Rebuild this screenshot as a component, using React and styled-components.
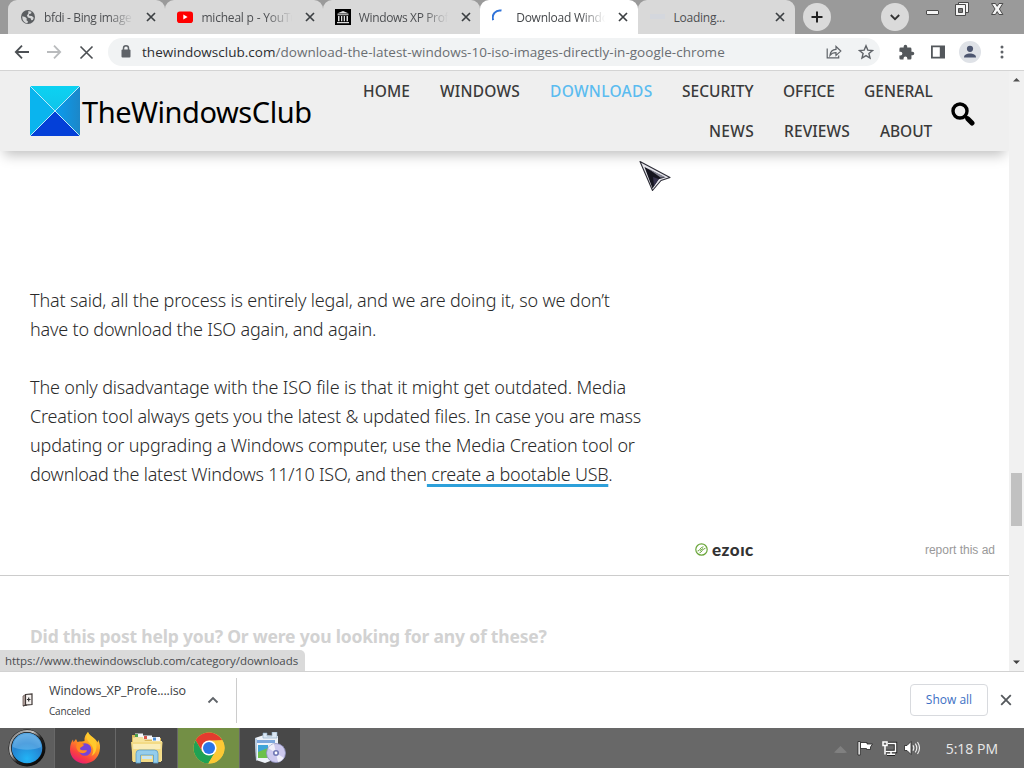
import React, { Component } from "react";
import styled, { createGlobalStyle } from "styled-components";

const tabs = [
  { title: "bfdi - Bing image", icon: "globe", track: -0.37 },
  { title: "micheal p - YouTu", icon: "youtube", track: -0.2 },
  { title: "Windows XP Prof", icon: "archive", track: -0.36 },
  { title: "Download Windo", icon: "spinner", active: true, track: -0.25 },
  { title: "Loading...", icon: "pending", track: -0.25, solid: true }
];

const menu = [
  [
    { label: "HOME", width: 47, track: 0.1 },
    { label: "WINDOWS", width: 80, track: 0.2 },
    { label: "DOWNLOADS", width: 102, track: 0.3, hover: true },
    { label: "SECURITY", width: 71, track: 0 },
    { label: "OFFICE", width: 51, track: -0.1 },
    { label: "GENERAL", width: 68, track: 0 }
  ],
  [
    { label: "NEWS", width: 45, track: 0.3 },
    { label: "REVIEWS", width: 66, track: 0.1 },
    { label: "ABOUT", width: 52, track: -0.1 }
  ]
];

const Favicon = ({ name }) => {
  switch (name) {
    case "globe":
      return (
        <svg width="16" height="16" viewBox="0 0 16 16">
          <circle cx="8" cy="8" r="7" fill="#5b5e61" />
          <path
            d="M2.3 7.2 5.2 8l1.6 1.5-.3 1.7L8 12.500l-.6 1.700C4.600 14 2 11.600 2.300 7.200z M8.300 2l3.200.7-.4 1.900-2.200.6.300 1.600 2.700.3 1.900 1.600-1 2.300-1.500.2-.7-2-2.700-.6-1-2.100 1.500-1.900z"
            fill="#d5d6d7"
          />
        </svg>
      );
    case "youtube":
      return (
        <svg width="16" height="16" viewBox="0 0 16 16">
          <rect x="0" y="2.500" width="16" height="11.500" rx="2.800" fill="#f00" />
          <path d="M6.300 5.600v5l4.300-2.500z" fill="#fff" />
        </svg>
      );
    case "archive":
      return (
        <svg width="16" height="16" viewBox="0 0 16 16">
          <rect width="16" height="16" fill="#000" />
          <path
            d="M2 4.500 8 2l6 2.500zM2.500 5.300h11v1h-11zM3 7h1.500v5.200H3zM6 7h1.300v5.200H6zM8.700 7H10v5.200H8.700zM11.500 7H13v5.200h-1.500zM2 13h12v1.200H2z"
            fill="#dcdcdc"
          />
        </svg>
      );
    case "spinner":
      return (
        <svg width="16" height="16" viewBox="0 0 16 16">
          <path
            d="M1.200 11.200A7.200 7.200 0 0 1 9.500 1.600"
            fill="none"
            stroke="#2f73d9"
            strokeWidth="2"
          />
        </svg>
      );
    default:
      return (
        <svg width="16" height="16" viewBox="0 0 16 16">
          <path d="M0 5h15v5H0z" fill="#d0d5e2" opacity=".5" />
        </svg>
      );
  }
};

const Cross = ({ size, color, weight }) => (
  <svg width={size} height={size} viewBox="0 0 10 10">
    <path d="M1 1l8 8M9 1L1 9" stroke={color} strokeWidth={weight} fill="none" />
  </svg>
);

const WindowControls = () => (
  <svg width="84" height="20" viewBox="0 0 84 20">
    <g fill="#f4f4f4" stroke="#4a4a4a" strokeWidth="1">
      <rect x="6.500" y="10.500" width="12" height="4" rx=".5" />
      <path d="M38.500 2.500h10v10h-10z" />
      <path d="M35.500 4.500h10v11h-10z" />
      <path d="M38.500 8.500h4v4h-4z" fill="#777" />
      <path d="M71.500 3.500h4l1.700 2.800 1.700-2.800h4l-3.500 5.500 3.500 5.500h-4l-1.700-2.900-1.700 2.900h-4L75 9z" />
    </g>
  </svg>
);

const BackIcon = ({ color }) => (
  <svg width="16" height="16" viewBox="0 0 16 16">
    <path
      d="M15 8H2M8 1.700 1.800 8 8 14.300"
      stroke={color}
      strokeWidth="1.800"
      fill="none"
    />
  </svg>
);

const ForwardIcon = ({ color }) => (
  <svg width="16" height="16" viewBox="0 0 16 16">
    <path
      d="M1 8h13M8 1.700 14.200 8 8 14.300"
      stroke={color}
      strokeWidth="1.800"
      fill="none"
    />
  </svg>
);

const LockIcon = () => (
  <svg width="10" height="14" viewBox="0 0 10 14">
    <rect x="0.500" y="4.500" width="9" height="8" rx="1" fill="#5f6368" />
    <path
      d="M2.500 5V3.300a2.500 2.500 0 0 1 5 0V5"
      stroke="#5f6368"
      strokeWidth="1.500"
      fill="none"
    />
  </svg>
);

const ShareIcon = () => (
  <svg width="16" height="16" viewBox="0 0 16 16">
    <g fill="none" stroke="#5f6368" strokeWidth="1.200">
      <path d="M1.200 4.500v9.300h11.500v-2.300" />
      <path d="M4 11.300c.4-3.800 2.700-5.700 6-5.900V2.500l4.800 4.600L10 11.400V8.600c-2.800 0-4.600.8-6 2.700z" />
    </g>
  </svg>
);

const StarIcon = () => (
  <svg width="16" height="16" viewBox="0 0 16 16">
    <path
      d="M8 1.800l1.800 4.300 4.700.4-3.600 3 1.100 4.600L8 11.600 4 14.100l1.100-4.600-3.600-3 4.700-.4z"
      fill="none"
      stroke="#5f6368"
      strokeWidth="1.400"
    />
  </svg>
);

const PuzzleIcon = () => (
  <svg width="17" height="17" viewBox="0 0 24 24">
    <path
      d="M20.500 11H19V7a2 2 0 0 0-2-2h-4V3.500a2.500 2.500 0 0 0-5 0V5H4a2 2 0 0 0-2 2v3.800h1.500a2.700 2.700 0 0 1 0 5.400H2V20a2 2 0 0 0 2 2h3.800v-1.500a2.700 2.700 0 0 1 5.400 0V22H17a2 2 0 0 0 2-2v-4h1.500a2.500 2.500 0 0 0 0-5z"
      fill="#54585c"
    />
  </svg>
);

const PanelIcon = () => (
  <svg width="16" height="16" viewBox="0 0 16 16">
    <path
      d="M1 1.500h14v13H1zM2.800 3.300v9.400h7V3.300z"
      fill="#54585c"
      fillRule="evenodd"
    />
  </svg>
);

const AvatarIcon = () => (
  <svg width="22" height="22" viewBox="0 0 22 22">
    <circle cx="11" cy="11" r="11" fill="#dfe2e7" />
    <circle cx="11" cy="7.800" r="3.100" fill="#4d5670" />
    <path d="M5 16.500c0-3 3-4 6-4s6 1 6 4z" fill="#4d5670" />
  </svg>
);

const DotsIcon = () => (
  <svg width="4" height="16" viewBox="0 0 4 16">
    <g fill="#5f6368">
      <circle cx="2" cy="3" r="1.500" />
      <circle cx="2" cy="8" r="1.500" />
      <circle cx="2" cy="13" r="1.500" />
    </g>
  </svg>
);

const SiteMark = () => (
  <svg width="50" height="50" viewBox="0 0 50 50">
    <defs>
      <linearGradient id="markTop" x1="0" y1="0" x2="0" y2="1">
        <stop offset="0" stopColor="#0cd2f2" />
        <stop offset="1" stopColor="#10c4ea" />
      </linearGradient>
      <linearGradient id="markRight" x1="0" y1="0" x2="1" y2="0">
        <stop offset="0" stopColor="#0a9cf0" />
        <stop offset="1" stopColor="#1c87c8" />
      </linearGradient>
    </defs>
    <path d="M0 0h50L25 25z" fill="url(#markTop)" />
    <path d="M0 0v50l25-25z" fill="#0ab4ee" />
    <path d="M50 0v50L25 25z" fill="url(#markRight)" />
    <path d="M0 50h50L25 25z" fill="#0440d8" />
    <path d="M0 0l50 50M50 0L0 50" stroke="#bdeafa" strokeWidth="1" />
  </svg>
);

const SearchIcon = () => (
  <svg width="24" height="24" viewBox="0 0 24 24">
    <circle cx="9" cy="9" r="7" fill="none" stroke="#000" strokeWidth="3.400" />
    <path d="M14.500 14.500l1.500 1.500" stroke="#000" strokeWidth="3.400" />
    <path d="M17 17l4 4" stroke="#000" strokeWidth="5" strokeLinecap="round" />
  </svg>
);

const EzoicMark = () => (
  <svg width="13" height="13" viewBox="0 0 13 13">
    <g fill="none" stroke="#6aa63a" strokeWidth="1.200">
      <circle cx="6.500" cy="6.500" r="5.700" />
      <path d="M2.500 8c2.500.4 2.200-3.800 6-4.300M4.500 9.800C7 9.400 7 6 10.500 5.200M5 7.600l3-2" strokeWidth="1" />
    </g>
  </svg>
);

const Pointer = () => (
  <svg width="34" height="34" viewBox="0 0 34 34">
    <path d="M1 1.500 31 17.500 22 20.500 13.500 30.500z" fill="#e4e4ea" stroke="#2c2c36" strokeWidth="1.100" strokeLinejoin="round" />
    <path d="M5.500 7 26 17.500l-6.500 1.800-6 9.200z" fill="#15151f" />
    <path d="M9 8.500l12.500 9 5.500 0z" fill="#80808f" />
    <path d="M14 17l6 2-5 7z" fill="#35324c" />
  </svg>
);

const IsoIcon = () => (
  <svg width="16" height="16" viewBox="0 0 16 16">
    <path d="M3 4 6 2.500v10L3 14z" fill="#b8a6a2" stroke="#6a5a57" strokeWidth=".8" />
    <path d="M5.500 2.500 12 2v10.500l-6.500 .5z" fill="#f6f2f0" stroke="#3f3836" strokeWidth="1.200" />
    <path d="M3 14l4-1" stroke="#3f3836" strokeWidth="1" />
    <path d="M8.700 5.500v4M6.900 7.500h3.600" stroke="#333" strokeWidth="1.200" />
  </svg>
);

const StartOrb = () => (
  <svg width="40" height="40" viewBox="0 0 40 40">
    <defs>
      <radialGradient id="orb" cx=".5" cy=".85" r=".85">
        <stop offset="0" stopColor="#22b4f6" />
        <stop offset=".6" stopColor="#2585d2" />
        <stop offset="1" stopColor="#5aa8e2" />
      </radialGradient>
      <linearGradient id="ring" x1="0" y1="0" x2="1" y2="1">
        <stop offset="0" stopColor="#777" />
        <stop offset=".35" stopColor="#c4c4c4" />
        <stop offset=".55" stopColor="#222" />
        <stop offset="1" stopColor="#000" />
      </linearGradient>
    </defs>
    <circle cx="20" cy="20" r="18.500" fill="#111" />
    <circle cx="20" cy="20" r="17" fill="none" stroke="url(#ring)" strokeWidth="2" />
    <circle cx="20" cy="20" r="15.300" fill="url(#orb)" />
    <path d="M6 19a14 13 0 0 1 28 0c-7 3.500-21 3.500-28 0z" fill="#84c1ee" opacity=".45" />
  </svg>
);

const FirefoxIcon = () => (
  <svg width="32" height="32" viewBox="0 0 32 32">
    <defs>
      <linearGradient id="fox" x1=".8" y1="0" x2=".25" y2="1">
        <stop offset="0" stopColor="#ffe53c" />
        <stop offset=".4" stopColor="#ff9a1f" />
        <stop offset=".75" stopColor="#fb4140" />
        <stop offset="1" stopColor="#e5197a" />
      </linearGradient>
    </defs>
    <path
      d="M19 0c1 4 8 6 9.500 10.500l.7-2.500c2 3.500 2.300 7 1.300 11.500C29 26.500 23 31.500 15.500 31.500 7 31.500 1 25 1 17.500 1 13 2.500 9.500 4 7.500l.5 2.700L7 7l1.500 3c3-.8 5.500-.3 7-1C15 5 17 2 19 0z"
      fill="url(#fox)"
    />
    <circle cx="16" cy="17.500" r="6.300" fill="#7543d8" />
    <path d="M8.500 10.500c2 1.300 4.500.7 6.500 2.300-1 2.300-4 2-4 4.200 2 2.500 5 .5 7 1.500-1 3-6 4-9 .5-2-2.500-2.500-5.500-.5-8.500z" fill="#ff8a21" />
    <path d="M19 0c1 4 8 6 8.500 13 .3 6-2 9.500-5 11 2.500-4 2.500-8-.5-11.500-3-3.500-6.500-6.500-3-12.500z" fill="#ffc92d" />
  </svg>
);

const FolderIcon = () => (
  <svg width="34" height="32" viewBox="0 0 34 32">
    <path d="M2 3h10l2 3h17v23H2z" fill="#dcb95c" />
    <path d="M5 1.500h8v4H5z" fill="#f5f7fa" />
    <path d="M5 2h3v3H5z" fill="#4ea04b" />
    <path d="M13 3.500h9v4h-9z" fill="#f5f7fa" />
    <path d="M14 4h3v3h-3z" fill="#d8564a" />
    <path d="M22 5h8v4h-8z" fill="#f5f7fa" />
    <path d="M23 5.500h3v3h-3z" fill="#4c8fd6" />
    <path d="M3 5.500h10l2 3.500h17v20H3z" fill="#f7e49c" />
    <path d="M1 10h31.500L31 30H3z" fill="#f3db86" />
    <path d="M3 12h27.500v5H3.300z" fill="#faedb8" />
    <path d="M6 31v-9.500Q6 18 9.500 18h15q3.500 0 3.500 3.500V31h-4.500v-8h-13v8z" fill="#94cdec" stroke="#5a9cc6" strokeWidth=".8" />
    <path d="M12 24h10v3H12z" fill="#c7e6f5" />
  </svg>
);

const ChromeIcon = () => (
  <svg width="32" height="32" viewBox="0 0 32 32">
    <circle cx="16" cy="16" r="15.500" fill="#ffcd40" />
    <path d="M2.600 8.200A15.500 15.500 0 0 1 29.400 8.300L16 8.500 9.500 20z" fill="#e33b2e" />
    <path d="M2.600 8.200A15.500 15.500 0 0 0 15.300 31.500L22 20l-12.500 0z" fill="#1fa254" />
    <path d="M29.400 8.300A15.500 15.500 0 0 1 15.300 31.500L22.500 20 22 9z" fill="#fcc934" />
    <circle cx="16" cy="16" r="7.600" fill="#fff" />
    <circle cx="16" cy="16" r="6" fill="#2b75e8" />
  </svg>
);

const InstallerIcon = () => (
  <svg width="32" height="32" viewBox="0 0 32 32">
    <path d="M1 6l9-3 14 1v22l-13 5-9-3z" fill="#eef3f9" />
    <path d="M1 6l2 1v22l-1-1z" fill="#b6cade" />
    <path d="M9 6V1h4v3h5V0h5v6z" fill="#dce8f4" stroke="#88a4c0" strokeWidth=".6" />
    <path d="M3 8h18v3H3z" fill="#7ba6dc" />
    <path d="M4 13h10v13H4z" fill="#3fa4d8" />
    <path d="M4 20l10-4v10H4z" fill="#6cc04a" />
    <circle cx="22" cy="21" r="9.500" fill="#cdc9ee" stroke="#8d8fbd" strokeWidth=".8" />
    <path d="M22 21l-8-5a9.500 9.500 0 0 1 6-4.200zM22 21l8 5a9.500 9.500 0 0 1-6 4.200z" fill="#fff" opacity=".7" />
    <circle cx="22" cy="21" r="3" fill="#7077b4" />
    <circle cx="22" cy="21" r="1.400" fill="#fff" />
  </svg>
);

const TrayIcons = () => (
  <svg width="90" height="18" viewBox="0 0 90 18">
    <path d="M1 13.500 7.500 7l6.500 6.500-3 .5H4z" fill="#808080" />
    <g fill="#fff" stroke="#222" strokeWidth=".8">
      <path d="M25 2.500h2.300V16H25z" />
      <path d="M27.500 3.500h6.500v1.500h5.500l-2 3 0 2.500h-4V9.500h-6z" />
    </g>
    <path
      d="M55 4.500h7.500v8h-10M58 12.500V15M54 15.200h8"
      fill="none"
      stroke="#222"
      strokeWidth="3.400"
    />
    <g fill="none" stroke="#fff" strokeWidth="1.500">
      <path d="M55 4.500h7.500v8h-10M58 12.500V15M54 15.200h8" />
      <path d="M50 3h4v3.500h-4zM52 6.500v9" />
    </g>
    <path d="M71.500 6.500H74l4-4v13l-4-4h-2.500z" fill="#fff" stroke="#222" strokeWidth=".8" />
    <path
      d="M80 6.300q1.700 2.700 0 5.400M82.300 4.600q3 4.400 0 8.800M84.500 3q4 6 0 12"
      fill="none"
      stroke="#f0f0f0"
      strokeWidth="1.100"
    />
  </svg>
);

class App extends Component {
  renderTabs = () =>
    tabs.map(tab => (
      <Tab key={tab.title} $active={tab.active}>
        <Favicon name={tab.icon} />
        <TabTitle $active={tab.active} $solid={tab.solid} $track={tab.track}>
          {tab.title}
        </TabTitle>
        <Cross size={10} color="#3c4043" weight={1.700} />
      </Tab>
    ));

  renderMenu = () =>
    menu.map((row, i) => (
      <MenuRow key={i}>
        {row.map(item => (
          <MenuItem
            key={item.label}
            $width={item.width}
            $track={item.track}
            $hover={item.hover}
          >
            {item.label}
          </MenuItem>
        ))}
      </MenuRow>
    ));

  render() {
    return (
      <Desktop>
        <GlobalStyle />
        <TabStrip>
          {this.renderTabs()}
          <RoundButton $gap={8}>
            <svg width="14" height="14" viewBox="0 0 14 14">
              <path d="M7 1.500v11M1.500 7h11" stroke="#222" strokeWidth="2" />
            </svg>
          </RoundButton>
          <RoundButton $gap={50}>
            <svg width="12" height="12" viewBox="0 0 12 12">
              <path d="M1.800 4 6 8.200 10.200 4" stroke="#333" strokeWidth="1.800" fill="none" />
            </svg>
          </RoundButton>
          <ControlsWrapper>
            <WindowControls />
          </ControlsWrapper>
        </TabStrip>
        <Toolbar>
          <ToolButton>
            <BackIcon color="#4c5054" />
          </ToolButton>
          <ToolButton>
            <ForwardIcon color="#b9bbbd" />
          </ToolButton>
          <ToolButton>
            <Cross size={15} color="#4c5054" weight={1.100} />
          </ToolButton>
          <AddressBar>
            <LockIcon />
            <Url>
              <b>thewindowsclub.com</b>
              /download-the-latest-windows-10-iso-images-directly-in-google-chrome
            </Url>
            <ShareIcon />
            <StarIcon />
          </AddressBar>
          <ToolButton $wide>
            <PuzzleIcon />
          </ToolButton>
          <ToolButton>
            <PanelIcon />
          </ToolButton>
          <ToolButton>
            <AvatarIcon />
          </ToolButton>
          <ToolButton>
            <DotsIcon />
          </ToolButton>
        </Toolbar>
        <Viewport>
          <Page>
            <SiteHeader>
              <SiteMark />
              <SiteName>TheWindowsClub</SiteName>
              <Menu>{this.renderMenu()}</Menu>
              <SearchWrapper>
                <SearchIcon />
              </SearchWrapper>
            </SiteHeader>
            <Article>
              <Paragraph>
                <Line $track={-0.165}>That said, all the process is entirely legal, and we are doing it, so we don’t</Line>
                <Line $track={-0.19}>have to download the ISO again, and again.</Line>
              </Paragraph>
              <Paragraph>
                <Line $track={-0.16}>The only disadvantage with the ISO file is that it might get outdated. Media</Line>
                <Line $track={-0.195}>Creation tool always gets you the latest &amp; updated files. In case you are mass</Line>
                <Line $track={-0.175}>updating or upgrading a Windows computer, use the Media Creation tool or</Line>
                <Line $track={-0.21}>
                  download the latest Windows 11/10 ISO, and then
                  <ArticleLink> create a bootable USB</ArticleLink>.
                </Line>
              </Paragraph>
            </Article>
            <AdFooter>
              <EzoicMark />
              <EzoicName>ezoıc</EzoicName>
              <ReportLink>report this ad</ReportLink>
            </AdFooter>
            <Related>Did this post help you? Or were you looking for any of these?</Related>
          </Page>
          <Scrollbar>
            <svg width="9" height="5" viewBox="0 0 9 5">
              <path d="M1 4.500 4.500 1 8 4.500z" fill="#505050" />
            </svg>
            <Thumb />
            <svg width="9" height="5" viewBox="0 0 9 5">
              <path d="M1 .5 4.500 4 8 .5z" fill="#404040" />
            </svg>
          </Scrollbar>
          <StatusBubble>https://www.thewindowsclub.com/category/downloads</StatusBubble>
        </Viewport>
        <DownloadBar>
          <DownloadItem>
            <IsoIcon />
            <FileInfo>
              <FileName>Windows_XP_Profe....iso</FileName>
              <FileState>Canceled</FileState>
            </FileInfo>
            <svg width="12" height="12" viewBox="0 0 12 12">
              <path d="M1.500 8.500 6 4l4.500 4.500" stroke="#5f6368" strokeWidth="1.800" fill="none" />
            </svg>
          </DownloadItem>
          <ShowAll>Show all</ShowAll>
          <Cross size={12} color="#54585c" weight={1.500} />
        </DownloadBar>
        <Taskbar>
          <TaskButton $width={54} $tone="start">
            <StartOrb />
          </TaskButton>
          <TaskButton $width={60}>
            <FirefoxIcon />
          </TaskButton>
          <TaskButton $width={61}>
            <FolderIcon />
          </TaskButton>
          <TaskButton $width={61} $tone="active">
            <ChromeIcon />
          </TaskButton>
          <TaskButton $width={60}>
            <InstallerIcon />
          </TaskButton>
          <Tray>
            <TrayIcons />
            <Clock>5:18 PM</Clock>
          </Tray>
        </Taskbar>
        <PointerLayer>
          <Pointer />
        </PointerLayer>
      </Desktop>
    );
  }
}

const GlobalStyle = createGlobalStyle`
  body {
    margin: 0;
    overflow: hidden;
  }

  * {
    box-sizing: border-box;
  }

  svg {
    display: block;
    flex-shrink: 0;
  }
`;

const Desktop = styled.div`
  position: relative;
  width: 1024px;
  height: 768px;
  display: flex;
  flex-direction: column;
  overflow: hidden;
  background: #fff;
  font-family: "Open Sans", "Noto Sans", sans-serif;
  color: #3c4043;
  white-space: nowrap;
`;

const TabStrip = styled.div`
  height: 34px;
  display: flex;
  align-items: center;
  padding-left: 8px;
  background: #9a9a9a;
`;

const Tab = styled.div`
  width: 157.400px;
  height: 34px;
  display: flex;
  align-items: center;
  padding: 0 9.500px 0 12px;
  border-radius: 9px 9px 0 0;
  background: ${props => (props.$active ? "#fff" : "#d9d9d9")};

  & + & {
    box-shadow: ${props =>
      props.$active ? "none" : "inset 1px 0 0 -0.300px #a8a8a8"};
  }
`;

const TabTitle = styled.div`
  flex: 1;
  margin: 0 8px;
  font-size: 12px;
  letter-spacing: ${props => props.$track}px;
  color: ${props => (props.$active ? "#45484b" : "#4d4f52")};
  mask-image: ${props =>
    props.$solid
      ? "none"
      : "linear-gradient(to right, #000 68%, transparent 95%)"};
`;

const RoundButton = styled.div`
  width: 28px;
  height: 28px;
  margin-left: ${props => props.$gap}px;
  display: flex;
  align-items: center;
  justify-content: center;
  border-radius: 50%;
  background: #dadada;
`;

const ControlsWrapper = styled.div`
  align-self: flex-start;
  margin-left: auto;
  margin-right: 20px;
`;

const Toolbar = styled.div`
  height: 37px;
  display: flex;
  align-items: center;
  padding: 0 6px;
  background: #fff;
  border-bottom: 1px solid #d4d4d4;
`;

const ToolButton = styled.div`
  width: 32px;
  display: flex;
  justify-content: center;
  margin-left: ${props => (props.$wide ? "10px" : "0")};
`;

const AddressBar = styled.div`
  width: 772px;
  height: 28px;
  margin-left: 6px;
  padding: 0 6px 0 13px;
  display: flex;
  align-items: center;
  gap: 16px;
  border-radius: 14px;
  background: #f1f3f4;
`;

const Url = styled.div`
  flex: 1;
  margin-left: -5px;
  font-size: 13.500px;
  letter-spacing: 0.020px;
  color: #6a6e72;

  b {
    font-weight: 400;
    color: #2b2d30;
  }
`;

const Viewport = styled.div`
  position: relative;
  height: 600px;
  display: flex;
  overflow: hidden;
`;

const Page = styled.div`
  width: 1009px;
  display: flex;
  flex-direction: column;
`;

const SiteHeader = styled.div`
  height: 80px;
  display: flex;
  align-items: center;
  padding: 0 34px 0 30px;
  background: #efefef;
  box-shadow: 0 8px 12px -4px rgba(0, 0, 0, 0.250);
`;

const SiteName = styled.div`
  margin-left: 2px;
  font-family: "Noto Sans", sans-serif;
  font-size: 29px;
  letter-spacing: -0.450px;
  color: #000;
`;

const Menu = styled.div`
  margin-left: auto;
  margin-right: 19px;
`;

const MenuRow = styled.div`
  height: 40px;
  display: flex;
  align-items: center;
  justify-content: flex-end;
  gap: 30px;
  padding-bottom: 1px;
`;

const MenuItem = styled.div`
  width: ${props => props.$width}px;
  font-family: "Noto Sans", sans-serif;
  font-size: 15.500px;
  font-weight: 500;
  letter-spacing: ${props => props.$track}px;
  color: ${props => (props.$hover ? "#5bbcf0" : "#3a3a3a")};
`;

const SearchWrapper = styled.div`
  padding-top: 5px;
`;

const Article = styled.div`
  padding: 135px 0 0 30px;
  font-family: "Noto Sans", sans-serif;
  font-size: 18px;
  line-height: 29.300px;
  color: #2a2a2a;
`;

const Paragraph = styled.p`
  margin: 0 0 28px;
`;

const Line = styled.span`
  display: block;
  font-weight: 300;
  letter-spacing: ${props => props.$track}px;
`;

const ArticleLink = styled.a`
  text-decoration: underline 3px #2da0da;
  text-decoration-skip-ink: none;
  text-underline-offset: 3px;
  white-space: pre;
`;

const AdFooter = styled.div`
  height: 51px;
  margin-top: 7px;
  padding: 0 14px 0 695px;
  display: flex;
  align-items: center;
  border-bottom: 1px solid #ccc;
`;

const EzoicName = styled.div`
  margin-left: 4px;
  font-family: Lato, sans-serif;
  font-size: 17px;
  font-weight: 900;
  letter-spacing: 0.500px;
  color: #333;
`;

const ReportLink = styled.div`
  margin-left: auto;
  font-family: "Liberation Sans", sans-serif;
  font-size: 12px;
  color: #999;
`;

const Related = styled.div`
  padding: 48px 0 0 30px;
  font-family: "Noto Sans", sans-serif;
  font-size: 17.500px;
  font-weight: 700;
  letter-spacing: -0.200px;
  color: #d2d2d2;
`;

const Scrollbar = styled.div`
  width: 15px;
  display: flex;
  flex-direction: column;
  align-items: center;
  justify-content: space-between;
  padding: 6px 0;
  background: #f1f1f1;
`;

const Thumb = styled.div`
  width: 11px;
  height: 53px;
  margin-top: 256px;
  background: #c1c1c1;
`;

const StatusBubble = styled.div`
  position: absolute;
  left: 0;
  bottom: 0;
  width: 305px;
  height: 21px;
  padding-left: 5px;
  border-radius: 0 5px 0 0;
  background: #dadada;
  font-size: 11.500px;
  letter-spacing: -0.050px;
  line-height: 21px;
  color: #4a4d50;
`;

const DownloadBar = styled.div`
  height: 57px;
  display: flex;
  align-items: center;
  padding-right: 12px;
  border-top: 1px solid #d2d2d2;
  background: #fff;
`;

const DownloadItem = styled.div`
  width: 237px;
  height: 45px;
  display: flex;
  align-items: center;
  padding: 0 17px 0 20px;
  border-right: 1px solid #ccc;
`;

const FileInfo = styled.div`
  flex: 1;
  margin-left: 13px;
  padding-top: 1px;
`;

const FileName = styled.div`
  font-size: 12.500px;
  letter-spacing: -0.130px;
  line-height: 20px;
`;

const FileState = styled.div`
  font-size: 10px;
  letter-spacing: -0.200px;
  line-height: 20px;
`;

const ShowAll = styled.div`
  width: 78px;
  height: 32px;
  margin-left: auto;
  margin-right: 12px;
  border: 1px solid #d8dade;
  border-radius: 4px;
  text-align: center;
  font-size: 12px;
  font-weight: 500;
  line-height: 30px;
  color: #3c6fc4;
`;

const tones = {
  start: "#5e5e5e",
  active: "#738f45",
  plain: "#484848"
};

const Taskbar = styled.div`
  height: 40px;
  display: flex;
  background: #686868;
`;

const TaskButton = styled.div`
  width: ${props => props.$width}px;
  height: 40px;
  margin-right: 1px;
  display: flex;
  align-items: center;
  justify-content: center;
  background: ${props => tones[props.$tone || "plain"]};
`;

const Tray = styled.div`
  margin-left: auto;
  padding-right: 26px;
  display: flex;
  align-items: center;
`;

const Clock = styled.div`
  margin-left: 23px;
  padding-top: 1px;
  font-size: 14px;
  color: #e8e8e8;
`;

const PointerLayer = styled.div`
  position: absolute;
  left: 639px;
  top: 160px;
`;

export default App;
